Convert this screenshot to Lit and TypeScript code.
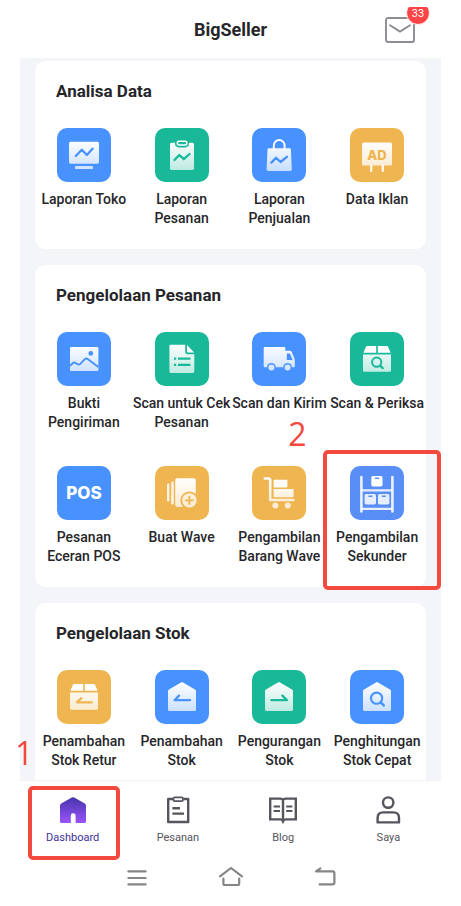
import { LitElement, html, css, svg, nothing, type SVGTemplateResult } from "lit";
import { customElement, state } from "lit/decorators.js";
import { classMap } from "lit/directives/class-map.js";

type Tone = "blue" | "green" | "amber" | "indigo";

interface Tile {
  label: string;
  tone: Tone;
  icon: SVGTemplateResult;
  step?: string;
}

interface Section {
  title: string;
  tiles: Tile[];
}

const FADE = "url(#fade)";

/* Glyphs are drawn on a 54x54 grid; currentColor is the tile colour. */
const cut = (d: string) => svg`<path d=${d} fill="none" stroke="currentColor"
  stroke-width="2.3" stroke-linecap="round" stroke-linejoin="round"></path>`;

const carton = svg`
  <path d="M17.2 14H26.2V20.7H13.4L15.8 14.9Q16.2 14 17.2 14Z" fill="#fff"></path>
  <path d="M27.8 14H36.8Q37.8 14 38.2 14.9L40.6 20.7H27.8Z" fill="#fff"></path>
  <path d="M13 22.4H41V38.2Q41 39.7 39.5 39.7H14.5Q13 39.7 13 38.2Z" fill=${FADE}></path>`;

const depot = svg`<path d="M26 12.4Q27 11.8 28 12.4L40 19.4Q41 20 41 21V39.5Q41 41 39.5 41H14.5Q13 41 13 39.5V21Q13 20 14 19.4Z" fill=${FADE}></path>`;

const icons = {
  monitor: svg`
    <rect x="12" y="13.7" width="30" height="22" rx="1.6" fill=${FADE}></rect>
    <rect x="18" y="38" width="18" height="3" rx=".6" fill="#fff" opacity=".75"></rect>
    ${cut("M18.8 28 24.8 21.8 29.8 27 35.6 20.8")}`,
  clipboard: svg`
    <rect x="15" y="14.7" width="24" height="27.3" rx="1.6" fill=${FADE}></rect>
    <rect x="20" y="11" width="14" height="8.4" rx="3.8" fill="currentColor"></rect>
    <rect x="22.4" y="13.2" width="9.4" height="3.8" rx="1.6" fill="currentColor" stroke="#fff" stroke-width="1.6"></rect>
    ${cut("M19.5 32 24.3 27 28.8 31.2 34.5 26")}`,
  bag: svg`
    <path d="M21.8 22V17.4A5.4 5.4 0 0 1 32.6 17.4V22" fill="none" stroke="#fff" stroke-width="1.9"></path>
    <path d="M17 20.2H37.4Q38.8 20.2 38.9 21.6L39.8 41.2Q39.8 43 38.2 43H16.2Q14.6 43 14.6 41.2L15.5 21.6Q15.6 20.2 17 20.2Z" fill=${FADE}></path>
    ${cut("M19.4 34.6 24 29.8 28.6 34 34.9 28.8")}`,
  ad: svg`
    <rect x="20" y="37" width="2.4" height="6.8" fill="#fff" opacity=".85"></rect>
    <rect x="31.6" y="37" width="2.4" height="6.8" fill="#fff" opacity=".85"></rect>
    <rect x="12" y="14.6" width="30" height="23" rx="1.6" fill=${FADE}></rect>
    <text class="ad" x="27" y="32" text-anchor="middle">AD</text>`,
  picture: svg`
    <rect x="13" y="15" width="28.4" height="24" rx="1" fill=${FADE}></rect>
    <circle cx="33.8" cy="21.4" r="2.4" fill="currentColor"></circle>
    <path d="M13 33.8 16 31Q17.4 29.8 19 31.2 21.4 33.6 23.6 31.6L27.6 27.4Q29.2 25.8 31 27.2L41.4 35" fill="none" stroke="currentColor" stroke-width="1.9"></path>`,
  document: svg`
    <path d="M15.8 12.7H30.2V20Q30.2 22.2 32.4 22.2H39.3V39.6Q39.3 41 37.9 41H15.8Q14.4 41 14.4 39.6V14.1Q14.4 12.7 15.8 12.7Z" fill=${FADE}></path>
    <path d="M32 12.9 39.2 20.4H33.2Q32 20.4 32 19.2Z" fill="#fff"></path>
    <path d="M19 26.7H21.2M23 26.7H35.4M19 32.8H21.2M23 32.8H35.4" stroke="currentColor" stroke-width="2.2"></path>`,
  truck: svg`
    <path d="M12.6 15H32.4Q33.3 15 33.3 15.9V18.8H38Q39 18.8 39.5 19.6L42.2 26Q42.8 27.2 42.8 28.4V34Q42.8 35.2 41.6 35.2H12.8Q11.7 35.2 11.7 34V15.9Q11.7 15 12.6 15Z" fill=${FADE}></path>
    <path d="M34.8 21.4H38L40.6 28H34.8Z" fill="currentColor"></path>
    <circle cx="19.4" cy="35.4" r="4.4" fill="currentColor"></circle>
    <circle cx="35.6" cy="35.4" r="4.4" fill="currentColor"></circle>
    <circle cx="19.4" cy="35.4" r="3" fill="#fff" opacity=".78"></circle>
    <circle cx="35.6" cy="35.4" r="3" fill="#fff" opacity=".78"></circle>`,
  cartonSearch: svg`${carton}
    <circle cx="26.7" cy="30.2" r="4.6" fill="none" stroke="currentColor" stroke-width="2"></circle>
    <path d="M30.2 33.6 32.8 36.2" stroke="currentColor" stroke-width="2.2" stroke-linecap="round"></path>`,
  pos: svg`<text class="pos" x="27" y="33" text-anchor="middle">POS</text>`,
  wave: svg`
    <rect x="12" y="17.6" width="2.4" height="17.8" rx="1" fill="#fff" opacity=".85"></rect>
    <rect x="16.2" y="15.4" width="2.6" height="23" rx="1" fill="#fff" opacity=".85"></rect>
    <rect x="20.2" y="12.3" width="20.6" height="28.6" rx="1.8" fill=${FADE}></rect>
    <circle cx="34.4" cy="34.4" r="9" fill="currentColor"></circle>
    <circle cx="34.4" cy="34.4" r="7.2" fill="#fff" opacity=".78"></circle>
    <path d="M34.4 30V38.8M30 34.4H38.8" stroke="currentColor" stroke-width="1.9"></path>`,
  cart: svg`
    <path d="M12.8 12.5H16.6Q18.2 12.5 18.2 14.1V34H41.4" fill="none" stroke=${FADE} stroke-width="2.6" stroke-linecap="round" stroke-linejoin="round"></path>
    <rect x="21.6" y="13.8" width="13.8" height="7.6" rx=".6" fill="#fff" opacity=".96"></rect>
    <rect x="21.6" y="23" width="20" height="8.2" rx=".6" fill=${FADE}></rect>
    <circle cx="23.4" cy="39.6" r="3" fill="#fff" opacity=".76"></circle>
    <circle cx="35.8" cy="39.6" r="3" fill="#fff" opacity=".76"></circle>`,
  shelf: svg`
    <path d="M11.4 11V45.4M42.4 11V45.4" stroke="#fff" stroke-width="2.6" stroke-linecap="round" opacity=".88"></path>
    <path d="M11.4 24.3H42.4M11.4 42.8H42.4" stroke="#fff" stroke-width="2.3" opacity=".85"></path>
    <rect x="21.3" y="10" width="11.2" height="10.4" rx="1.6" fill="#fff"></rect>
    <rect x="14.6" y="28" width="11.4" height="10.4" rx="1.6" fill="#fff" opacity=".85"></rect>
    <rect x="28" y="28" width="11.4" height="10.4" rx="1.6" fill="#fff" opacity=".85"></rect>
    <path d="M25 12.3H29M18.4 30.3H22.4M31.8 30.3H35.8" stroke="currentColor" stroke-width="1.5"></path>`,
  cartonBack: svg`${carton}${cut("M34.6 32.4H20L24.2 28.2")}`,
  depotIn: svg`${depot}${cut("M35 30.2H19.6L24 25.6")}`,
  depotOut: svg`${depot}${cut("M19.4 30.2H35L30.4 25.6")}`,
  depotSearch: svg`${depot}
    <circle cx="26.6" cy="28.2" r="5.6" fill="none" stroke="currentColor" stroke-width="2.1"></circle>
    <path d="M30.8 32.4 33.8 35.4" stroke="currentColor" stroke-width="2.4" stroke-linecap="round"></path>`,
};

const sections: Section[] = [
  {
    title: "Analisa Data",
    tiles: [
      { label: "Laporan Toko", tone: "blue", icon: icons.monitor },
      { label: "Laporan Pesanan", tone: "green", icon: icons.clipboard },
      { label: "Laporan Penjualan", tone: "blue", icon: icons.bag },
      { label: "Data Iklan", tone: "amber", icon: icons.ad },
    ],
  },
  {
    title: "Pengelolaan Pesanan",
    tiles: [
      { label: "Bukti Pengiriman", tone: "blue", icon: icons.picture },
      { label: "Scan untuk Cek Pesanan", tone: "green", icon: icons.document },
      { label: "Scan dan Kirim", tone: "blue", icon: icons.truck },
      { label: "Scan & Periksa", tone: "green", icon: icons.cartonSearch },
      { label: "Pesanan Eceran POS", tone: "blue", icon: icons.pos },
      { label: "Buat Wave", tone: "amber", icon: icons.wave },
      { label: "Pengambilan Barang Wave", tone: "amber", icon: icons.cart },
      { label: "Pengambilan Sekunder", tone: "indigo", icon: icons.shelf, step: "2" },
    ],
  },
  {
    title: "Pengelolaan Stok",
    tiles: [
      { label: "Penambahan Stok Retur", tone: "amber", icon: icons.cartonBack },
      { label: "Penambahan Stok", tone: "blue", icon: icons.depotIn },
      { label: "Pengurangan Stok", tone: "green", icon: icons.depotOut },
      { label: "Penghitungan Stok Cepat", tone: "blue", icon: icons.depotSearch },
    ],
  },
];

const tabs = [
  {
    label: "Dashboard",
    step: "1",
    icon: svg`<path d="M14.8 3.6Q16 2.8 17.2 3.6L27.8 9.6Q29 10.4 29 11.6V27.4Q29 29 27.4 29H18.6V21.6Q18.6 19.2 16.2 19.2T13.8 21.6V29H4.6Q3 29 3 27.4V11.6Q3 10.4 4.2 9.6Z" fill="url(#violet)"></path>`,
  },
  {
    label: "Pesanan",
    icon: svg`<g fill="none" stroke="#56545c" stroke-width="2.4" stroke-linejoin="round">
      <path d="M11 5H6.2V28H26.2V5H21.4"></path><rect x="11.4" y="3.4" width="9.6" height="3.8" rx="1.4" stroke-width="1.8"></rect>
      <path d="M10.4 14.2H18M10.4 19.6H22"></path></g>`,
  },
  {
    label: "Blog",
    icon: svg`<g fill="none" stroke="#56545c" stroke-width="2.4">
      <path d="M16 6Q15.2 4.6 13.4 4.6H3.2V25.4H13.4Q15.2 25.4 16 27.2 16.8 25.4 18.6 25.4H28.8V4.6H18.6Q16.8 4.6 16 6V28.6"></path>
      <path d="M6.6 12.6H13M6.6 17H13M19.2 12.6H25.4M19.2 17H25.4" stroke-width="2"></path></g>`,
  },
  {
    label: "Saya",
    icon: svg`<g fill="none" stroke="#56545c" stroke-width="2.4" stroke-linejoin="round">
      <circle cx="16.2" cy="8.6" r="5.2"></circle><path d="M5.6 28.4V24Q5.6 18.4 11.2 18.4H21.4Q27 18.4 27 24V28.4Z"></path></g>`,
  },
];

const systemKeys = [
  { name: "Menu", icon: svg`<path d="M3.4 6.4H20.6M3.4 13H20.6M3.4 19.4H20.6"></path>` },
  { name: "Beranda", icon: svg`<path d="M1 11.4 12 3 23 11.4M4.4 13.6V18.4Q4.4 20 6 20H18.6Q20.2 20 20.2 18.4V13.6"></path>` },
  { name: "Kembali", icon: svg`<path d="M7.4 3.4 3 6.4H19.6Q21.4 6.4 21.4 8.2V17.6Q21.4 19.4 19.6 19.4H6.6"></path>` },
];

@customElement("app-root")
export class AppRoot extends LitElement {
  @state() private active = "Dashboard";

  static styles = css`
    :host {
      display: flex;
      flex-direction: column;
      box-sizing: border-box;
      height: 100vh;
      padding: 7px 20px 0;
      background: #fff;
      color: #26262a;
      font-family: Roboto, "Liberation Sans", sans-serif;
    }
    button {
      margin: 0;
      padding: 0;
      border: 0;
      background: none;
      color: inherit;
      font: inherit;
      cursor: pointer;
    }
    svg { display: block; }
    .defs { position: absolute; width: 0; height: 0; }

    .header {
      display: grid;
      grid-template-columns: 1fr auto 1fr;
      align-items: center;
      flex: none;
      height: 45px;
      padding: 0 26px 6px;
      overflow: hidden;
    }
    .brand {
      grid-column: 2;
      margin: 0;
      font-size: 18px;
      line-height: 24px;
      font-weight: 700;
    }
    .mail {
      position: relative;
      justify-self: end;
      color: #8d8c93;
    }
    .count {
      position: absolute;
      top: -16px;
      right: -15px;
      box-sizing: border-box;
      width: 24px;
      height: 24px;
      border: 1px solid #fff;
      border-radius: 50%;
      background: #fd4547;
      color: #fff;
      font-size: 11px;
      line-height: 23px;
      text-align: center;
    }

    .content {
      display: flex;
      flex-direction: column;
      gap: 16px;
      flex: 1;
      min-height: 0;
      padding: 3px 15px 16px;
      overflow-y: auto;
      scrollbar-width: none;
      background: #f4f5f8;
    }
    .card {
      flex: none;
      padding: 20px 0 21px;
      border-radius: 11px;
      background: #fff;
    }
    .title {
      margin: 0 0 27px;
      padding: 0 21px;
      font-size: 17px;
      line-height: 20px;
      font-weight: 700;
    }
    .grid {
      display: grid;
      grid-template-columns: repeat(4, minmax(0, 1fr));
      row-gap: 34px;
    }
    .cell {
      position: relative;
      display: flex;
      justify-content: center;
    }
    .tile {
      display: flex;
      flex-direction: column;
      align-items: center;
      justify-content: flex-start;
      gap: 8px;
      width: 100%;
    }
    .icon {
      width: 54px;
      height: 54px;
      border-radius: 10px;
    }
    .icon svg { width: 54px; height: 54px; }
    .blue { background: #4892ff; color: #4892ff; }
    .green { background: #19b898; color: #19b898; }
    .amber { background: #efb550; color: #efb550; }
    .indigo { background: #588ef6; color: #588ef6; }
    .label {
      font-size: 14px;
      line-height: 19px;
      font-weight: 500;
      text-align: center;
    }
    .ad { font: 800 13px Inter, sans-serif; fill: currentColor; }
    .pos { font: 800 17px Inter, sans-serif; fill: #fff; }

    .frame {
      position: absolute;
      box-sizing: border-box;
      border: 4px solid #f4493f;
      border-radius: 5px;
      pointer-events: none;
    }
    .step {
      position: absolute;
      color: #f4493f;
      font: 400 32px/32px "Open Sans", sans-serif;
      pointer-events: none;
    }
    .cell .frame { inset: -16px -15px -24px -5px; }
    .cell .step { top: -48px; left: -40px; }

    .tabs {
      position: relative;
      display: grid;
      grid-template-columns: repeat(4, 1fr);
      flex: none;
      height: 79px;
      border-top: 1px solid #f1f1f4;
      background: #fff;
    }
    .tab {
      position: relative;
      display: flex;
      flex-direction: column;
      align-items: center;
      padding-top: 13px;
      gap: 5px;
      color: #56545c;
      font-size: 11px;
      line-height: 14px;
      text-decoration: none;
    }
    .tab.active { color: #40309c; }
    .tab svg { width: 32px; height: 32px; }
    .tab .frame { inset: 5px 5px 0 8px; }
    .tab .step { top: -44px; left: -5px; }

    .system {
      display: flex;
      justify-content: center;
      gap: 70px;
      flex: none;
      padding: 5px 0 17px;
    }
    .system svg {
      width: 24px;
      height: 24px;
      fill: none;
      stroke: #858585;
      stroke-width: 2.2;
      stroke-linecap: round;
      stroke-linejoin: round;
    }
  `;

  private annotate(step?: string) {
    return step
      ? html`<span class="frame"></span><span class="step">${step}</span>`
      : nothing;
  }

  private renderTile(tile: Tile) {
    return html`<div class="cell">
      <button class="tile" type="button">
        <span class="icon ${tile.tone}">
          <svg viewBox="0 0 54 54" aria-hidden="true">${tile.icon}</svg>
        </span>
        <span class="label">${tile.label}</span>
      </button>
      ${this.annotate(tile.step)}
    </div>`;
  }

  render() {
    return html`
      <svg class="defs" aria-hidden="true">
        <linearGradient id="fade" gradientUnits="userSpaceOnUse" x1="0" y1="12" x2="0" y2="43">
          <stop offset="0" stop-color="#fff"></stop>
          <stop offset="1" stop-color="#fff" stop-opacity=".7"></stop>
        </linearGradient>
        <linearGradient id="violet" x1="0" y1="0" x2="0" y2="1">
          <stop offset="0" stop-color="#4634ac"></stop>
          <stop offset="1" stop-color="#9a55fa"></stop>
        </linearGradient>
      </svg>

      <header class="header">
        <h1 class="brand">BigSeller</h1>
        <button class="mail" type="button" aria-label="Pesan masuk">
          <svg width="30" height="26" viewBox="0 0 30 26" fill="none" stroke="currentColor" stroke-width="1.9" stroke-linecap="round" stroke-linejoin="round" aria-hidden="true">
            <rect x="1" y="1" width="28" height="24" rx="2"></rect>
            <path d="M5 8.2 15 14.6 25 8.2"></path>
          </svg>
          <span class="count">33</span>
        </button>
      </header>

      <main class="content">
        ${sections.map(
          (section) => html`<section class="card">
            <h2 class="title">${section.title}</h2>
            <div class="grid">${section.tiles.map((tile) => this.renderTile(tile))}</div>
          </section>`
        )}
      </main>

      <nav class="tabs">
        ${tabs.map(
          (tab) => html`<a
            href="#${tab.label}"
            class=${classMap({ tab: true, active: tab.label === this.active })}
            @click=${() => (this.active = tab.label)}
          >
            <svg viewBox="0 0 32 32" aria-hidden="true">${tab.icon}</svg>
            <span>${tab.label}</span>
            ${this.annotate(tab.step)}
          </a>`
        )}
      </nav>

      <footer class="system">
        ${systemKeys.map(
          (key) => html`<button type="button" aria-label=${key.name}>
            <svg viewBox="0 0 24 24" aria-hidden="true">${key.icon}</svg>
          </button>`
        )}
      </footer>
    `;
  }
}
